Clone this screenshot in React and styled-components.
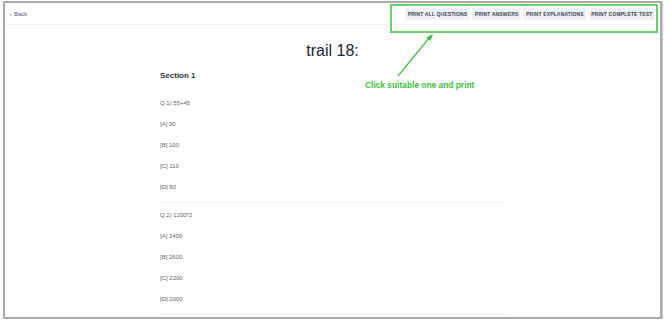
import React from 'react';
import styled, { createGlobalStyle } from 'styled-components';

const GlobalStyle = createGlobalStyle`
  html, body {
    margin: 0;
    background: #ffffff;
  }
  body {
    font-family: "Liberation Sans", Arial, sans-serif;
  }
`;

const Page = styled.div`
  padding: 1px 0 0 3px;
`;

const Frame = styled.div`
  position: relative;
  box-sizing: border-box;
  width: 659px;
  height: 318px;
  border: 2px solid #a9a9a9;
  box-shadow: 1px 1px 1px #cfcfcf;
  background: #fff;
  overflow: hidden;
`;

const Header = styled.header`
  display: flex;
  align-items: center;
  justify-content: space-between;
  height: 21px;
  padding: 0 5px 0 5px;
  border-bottom: 1px solid #f1f1f3;
`;

const Back = styled.a`
  font-size: 6px;
  color: #555b66;
  text-decoration: none;
  display: flex;
  align-items: center;
  gap: 2px;
`;

const Actions = styled.div`
  display: flex;
  gap: 2.5px;
`;

const PrintButton = styled.button`
  height: 13px;
  padding: 0 2.5px;
  border: none;
  border-radius: 2px;
  background: #edf0f5;
  color: #3f4654;
  font-family: "Liberation Sans", Arial, sans-serif;
  font-size: 5px;
  font-weight: 700;
  letter-spacing: 0.15px;
  text-transform: uppercase;
`;

const Main = styled.main`
  display: flex;
  flex-direction: column;
  align-items: center;
`;

const Title = styled.h1`
  margin: 17px 0 0;
  font-size: 16px;
  line-height: 18px;
  font-weight: 400;
  color: #1d2433;
`;

const Column = styled.div`
  width: 345px;
`;

const SectionTitle = styled.h2`
  margin: 11px 0 0;
  font-size: 8px;
  line-height: 10px;
  font-weight: 700;
  color: #2b2f36;
`;

const Question = styled.div`
  padding: ${p => (p.first ? '17.5px' : '7.5px')} 0 10.5px;
  border-bottom: 1px solid #ececee;
`;

const Line = styled.p`
  margin: 0;
  font-size: 6px;
  line-height: 9px;
  color: #5a5f68;
  & + & {
    margin-top: 12px;
  }
`;

const Highlight = styled.div`
  position: absolute;
  left: 385px;
  top: 1px;
  width: 268px;
  height: 29px;
  box-sizing: border-box;
  border: 2px solid #6ad06a;
  pointer-events: none;
`;

const Arrow = styled.svg`
  position: absolute;
  left: 385px;
  top: 28px;
  overflow: visible;
`;

const Note = styled.div`
  position: absolute;
  left: 360px;
  top: 77px;
  font-size: 8.4px;
  line-height: 10px;
  font-weight: 700;
  color: #3dbf3d;
  white-space: nowrap;
`;

const questions = [
  { q: 'Q.1) 55+45', options: ['[A] 90', '[B] 100', '[C] 110', '[D] 80'] },
  { q: 'Q.2) 1200*2', options: ['[A] 2400', '[B] 2600', '[C] 2200', '[D] 2000'] },
];

const buttons = ['Print all questions', 'Print answers', 'Print explanations', 'Print complete test'];

export default function App() {
  return (
    <Page>
      <GlobalStyle />
      <Frame>
        <Header>
          <Back href="#">
            <span>‹</span> Back
          </Back>
          <Actions>
            {buttons.map(b => (
              <PrintButton key={b}>{b}</PrintButton>
            ))}
          </Actions>
        </Header>
        <Main>
          <Title>trail 18:</Title>
          <Column>
            <SectionTitle>Section 1</SectionTitle>
            {questions.map((item, i) => (
              <Question key={item.q} first={i === 0}>
                <Line>{item.q}</Line>
                {item.options.map(o => (
                  <Line key={o}>{o}</Line>
                ))}
              </Question>
            ))}
          </Column>
        </Main>

        <Highlight />
        <Arrow width="50" height="50" viewBox="0 0 50 50">
          <line x1="8" y1="45" x2="40" y2="6" stroke="#45c045" strokeWidth="1.2" />
          <polygon points="43,3 36,6.5 40.5,10" fill="#45c045" />
        </Arrow>
        <Note>Click suitable one and print</Note>
      </Frame>
    </Page>
  );
}
